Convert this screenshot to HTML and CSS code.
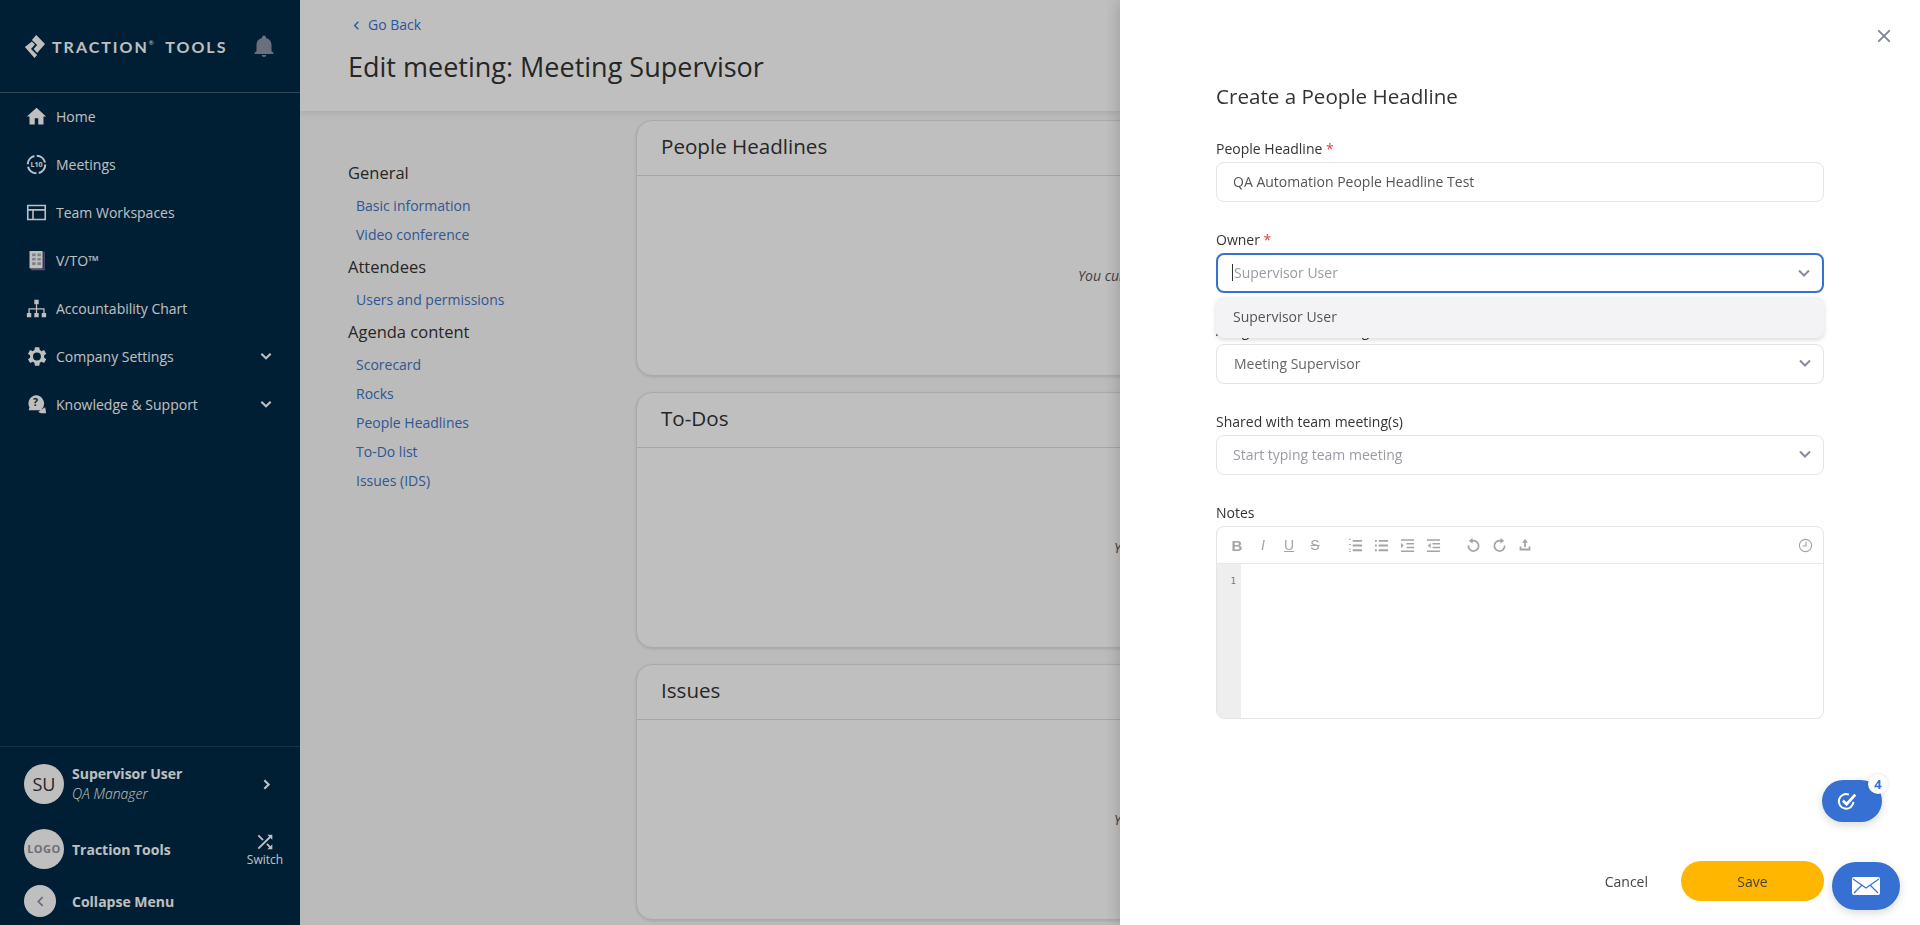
FILE: index.html
```html
<!DOCTYPE html>
<html lang="en">

<head>
    <meta charset="utf-8">
    <title>Edit meeting: Meeting Supervisor</title>
    <link rel="stylesheet" href="styles.css">
</head>

<body>
    <aside class="sidebar">
        <div class="brand">
            <svg class="brand_logo" viewBox="0 0 24 24" preserveAspectRatio="none"><path d="M14 1l10 9-9 9-4-4 4-4-6-5z"/><path d="M9 7.500l3.500 3-4.500 4.500 7 6-3 3L1 13z"/></svg>
            <span class="brand_name">TRACTION<sup>®</sup> TOOLS</span>
            <svg class="bell" viewBox="0 0 24 24"><path d="M12 23c1.200 0 2.200-.9 2.200-2H9.800c0 1.100 1 2 2.200 2zm7.500-6v-6c0-3.400-2-6.200-5.500-7V3.500C14 2.400 13.100 1.500 12 1.500S10 2.400 10 3.500V4c-3.500.8-5.500 3.600-5.500 7v6l-2 2v1h19v-1z"/></svg>
        </div>
        <nav class="mainnav">
            <a href="#"><svg viewBox="0 0 24 24"><path d="M10 21v-7h4v7h6v-9h3L12 2 1 12h3v9z"/></svg>Home</a>
            <a href="#"><svg viewBox="0 0 24 24"><circle class="ic_line" cx="12" cy="12" r="10" stroke-width="2.400" stroke-dasharray="13 2.700"/><text x="12" y="15" text-anchor="middle" class="ic_text">L10</text></svg>Meetings</a>
            <a href="#"><svg viewBox="0 0 24 24"><path class="ic_line" stroke-width="1.800" d="M2 4h20v16H2zM2 9h20M8 9v11"/></svg>Team Workspaces</a>
            <a href="#"><svg viewBox="0 0 24 24"><path d="M4 1h15v20H5a1 1 0 0 1-1-1z"/><path d="M20 2h1.500v21H6v-1.500h14z" fill="#8d5f9c"/><path d="M7 4h4v3H7zM13 4h4v3h-4zM7 9h4v3H7zM13 9h4v3h-4zM7 14h4v3H7zM13 14h4v3h-4z" fill="#a9adb5"/></svg>V/TO™</a>
            <a href="#"><svg viewBox="0 0 24 24"><path d="M9.500 2h5v5h-5zM1 17h5v5H1zM9.500 17h5v5h-5zM18 17h5v5h-5z"/><path class="ic_line" stroke-width="1.500" d="M12 7v10M3.500 17v-4.500h17V17"/></svg>Accountability Chart</a>
            <a href="#"><svg viewBox="0 0 24 24"><path d="M20.600 13.200c.1-.4.100-.8.100-1.200s0-.8-.1-1.200l2.500-2-2.400-4.100-3 1.200c-.6-.5-1.300-.9-2-1.200L15.200 1.500h-5L9.700 4.700c-.7.3-1.400.7-2 1.200l-3-1.200-2.400 4.100 2.500 2c-.1.400-.1.800-.1 1.200s0 .8.100 1.200l-2.500 2 2.400 4.100 3-1.200c.6.500 1.300.9 2 1.200l.5 3.200h5l.5-3.200c.7-.3 1.400-.7 2-1.200l3 1.200 2.400-4.100zM12.500 16.500a4.500 4.500 0 1 1 0-9 4.500 4.500 0 0 1 0 9z"/></svg>Company Settings<svg class="chev" viewBox="0 0 12 12"><path class="ic_line" stroke-width="1.800" d="M2 4l4 4 4-4"/></svg></a>
            <a href="#"><svg viewBox="0 0 24 24"><path d="M11 1.500a9.500 9.500 0 0 1 7 16l-1 1H3l1-3A9.500 9.500 0 0 1 11 1.500z"/><path d="M17 18l5-3 1 7h-6l-3-1.500z"/><text x="11" y="14" text-anchor="middle" class="ic_q">?</text></svg>Knowledge &amp; Support<svg class="chev" viewBox="0 0 12 12"><path class="ic_line" stroke-width="1.800" d="M2 4l4 4 4-4"/></svg></a>
        </nav>
        <div class="side_bottom">
            <div class="side_row user_row">
                <span class="avatar">SU</span>
                <div class="user_info">
                    <strong>Supervisor User</strong>
                    <em>QA Manager</em>
                </div>
                <svg class="chev_right" viewBox="0 0 12 12"><path class="ic_line" stroke-width="2" d="M4 2l4 4-4 4"/></svg>
            </div>
            <div class="side_row org_row">
                <span class="avatar avatar_logo">LOGO</span>
                <strong>Traction Tools</strong>
                <span class="switch">
                    <svg viewBox="0 0 24 24"><path d="M10.600 9.200L5.400 4 4 5.400l5.200 5.200zM14.500 4l2 2L4 18.600 5.400 20 18 7.500l2 2V4zm.3 9.400l-1.400 1.400 3.100 3.100-2 2.100H20v-5.500l-2 2z"/></svg>
                    Switch
                </span>
            </div>
            <div class="side_row collapse_row">
                <span class="collapse_btn"><svg viewBox="0 0 12 12"><path d="M8 2L4 6l4 4" fill="none" stroke="#8b93a5" stroke-width="1.600"/></svg></span>
                <strong>Collapse Menu</strong>
            </div>
        </div>
    </aside>

    <main class="page">
        <header class="page_head">
            <a class="goback" href="#"><svg viewBox="0 0 12 12"><path d="M8 2L4 6l4 4" fill="none" stroke="currentColor" stroke-width="1.500"/></svg>Go Back</a>
            <h1>Edit meeting: Meeting Supervisor</h1>
        </header>
        <div class="page_body">
            <nav class="sections">
                <h3>General</h3>
                <a href="#">Basic information</a>
                <a href="#">Video conference</a>
                <h3>Attendees</h3>
                <a href="#">Users and permissions</a>
                <h3>Agenda content</h3>
                <a href="#">Scorecard</a>
                <a href="#">Rocks</a>
                <a href="#">People Headlines</a>
                <a href="#">To-Do list</a>
                <a href="#">Issues (IDS)</a>
            </nav>
            <div class="cards">
                <section class="card">
                    <h2>People Headlines</h2>
                    <p class="card_empty first">You currently have</p>
                </section>
                <section class="card">
                    <h2>To-Dos</h2>
                    <p class="card_empty">You currently</p>
                </section>
                <section class="card">
                    <h2>Issues</h2>
                    <p class="card_empty">You currently</p>
                </section>
            </div>
        </div>
    </main>

    <div class="overlay"></div>

    <section class="panel">
        <button class="close" aria-label="Close"><svg viewBox="0 0 14 14"><path d="M2 2l10 10M12 2L2 12" stroke="#7d8494" stroke-width="1.600" fill="none"/></svg></button>
        <h2 class="panel_title">Create a People Headline</h2>

        <div class="field">
            <label>People Headline <span class="req">*</span></label>
            <div class="box">QA Automation People Headline Test</div>
        </div>

        <div class="field">
            <label>Owner <span class="req">*</span></label>
            <div class="box box_focus">
                <span class="caret"></span><span class="placeholder">Supervisor User</span>
                <svg class="arrow" viewBox="0 0 14 14"><path d="M2 4.500l5 5 5-5" fill="none" stroke="#8a8a9a" stroke-width="2"/></svg>
            </div>
            <div class="dropdown">Supervisor User</div>
        </div>

        <div class="field">
            <label>Assign to team meeting</label>
            <div class="box">
                <span class="value">Meeting Supervisor</span>
                <svg class="arrow" viewBox="0 0 14 14"><path d="M2 4.500l5 5 5-5" fill="none" stroke="#8a8a9a" stroke-width="2"/></svg>
            </div>
        </div>

        <div class="field">
            <label>Shared with team meeting(s)</label>
            <div class="box">
                <span class="placeholder">Start typing team meeting</span>
                <svg class="arrow" viewBox="0 0 14 14"><path d="M2 4.500l5 5 5-5" fill="none" stroke="#8a8a9a" stroke-width="2"/></svg>
            </div>
        </div>

        <div class="field notes">
            <label>Notes</label>
            <div class="editor">
                <div class="toolbar">
                    <div class="tool_group">
                        <span class="tool tool_b">B</span>
                        <span class="tool tool_i">I</span>
                        <span class="tool tool_u">U</span>
                        <span class="tool tool_s">S</span>
                    </div>
                    <div class="tool_group">
                        <span class="tool"><svg viewBox="0 0 16 16"><path d="M5 3h10M5 8h10M5 13h10" stroke-width="2"/><path d="M1 1.500h2M1 7h2M1 12h2M1 14.500h2" stroke-width="1"/></svg></span>
                        <span class="tool"><svg viewBox="0 0 16 16"><path d="M5 3h10M5 8h10M5 13h10M1 3h2M1 8h2M1 13h2" stroke-width="2"/></svg></span>
                        <span class="tool"><svg viewBox="0 0 16 16"><path d="M1 2h14M7 6h8M7 10h8M1 14h14" stroke-width="1.600"/><path class="solid" d="M1 5l3 3-3 3z"/></svg></span>
                        <span class="tool"><svg viewBox="0 0 16 16"><path d="M1 2h14M7 6h8M7 10h8M1 14h14" stroke-width="1.600"/><path class="solid" d="M5 5L2 8l3 3z"/></svg></span>
                    </div>
                    <div class="tool_group">
                        <span class="tool"><svg viewBox="0 0 16 16"><path d="M5.500 3.500a5.500 5.500 0 1 1-3 4.500" stroke-width="1.800"/><path class="solid" d="M7 0v6L3 3z"/></svg></span>
                        <span class="tool"><svg viewBox="0 0 16 16"><path d="M10.500 3.500a5.500 5.500 0 1 0 3 4.500" stroke-width="1.800"/><path class="solid" d="M9 0v6l4-3z"/></svg></span>
                        <span class="tool"><svg class="upload" viewBox="0 0 16 16"><path d="M8 3v8M2 10v4h12v-4" stroke-width="2.400"/><path class="solid" d="M8 0l4 5H4z"/></svg></span>
                    </div>
                    <span class="tool history"><svg viewBox="0 0 16 16"><circle cx="8" cy="8" r="6.500" stroke-width="1.200"/><path d="M8.500 4v4.500H5" stroke-width="1.200"/></svg></span>
                </div>
                <div class="editor_body">
                    <div class="gutter">1</div>
                </div>
            </div>
        </div>

        <div class="panel_foot">
            <button class="btn_cancel">Cancel</button>
            <button class="btn_save">Save</button>
        </div>

        <button class="fab fab_tasks" aria-label="Tasks">
            <svg viewBox="0 0 24 24"><path d="M19 13a8 8 0 1 1-5-8" fill="none" stroke="#fff" stroke-width="2.200"/><path d="M7.500 11.500l4 4L21 5" fill="none" stroke="#fff" stroke-width="3"/></svg>
            <span class="badge">4</span>
        </button>
        <button class="fab fab_mail" aria-label="Messages">
            <svg viewBox="0 0 28 18"><rect width="28" height="18" rx="2" fill="#fff"/><path d="M1 2l13 9 13-9M2 16l8-8M26 16l-8-8" fill="none" stroke="#3570d2" stroke-width="1.200"/></svg>
        </button>
    </section>
</body></html>
```

FILE: styles.css
```css
* {
    box-sizing: border-box;
}

html,
body {
    height: 100%;
}

body {
    margin: 0;
    display: flex;
    overflow: hidden;
    font-family: 'Open Sans', sans-serif;
    font-size: 14px;
    color: #333;
    background-color: #fafafa;
}

a {
    text-decoration: none;
}

button {
    font-family: inherit;
    border: none;
    background: none;
    padding: 0;
}

/*Sidebar*/
.sidebar {
    flex: 0 0 300px;
    display: flex;
    flex-direction: column;
    background-color: #002a46;
    color: #fff;
}

.brand {
    flex: 0 0 93px;
    display: flex;
    align-items: center;
    padding: 0 28px 0 24px;
    border-bottom: 1px solid rgba(255, 255, 255, .25);
}

.brand_logo {
    width: 21px;
    height: 24px;
    fill: #fff;
    margin-right: 7px;
}

.brand_name {
    font-family: 'Lato', sans-serif;
    font-weight: 700;
    font-size: 16px;
    letter-spacing: 2px;
    white-space: nowrap;
}

.brand_name sup {
    font-size: 6px;
    font-weight: 400;
    letter-spacing: 0;
    margin-right: 6px;
    vertical-align: 8px;
    line-height: 0;
}

.bell {
    width: 24px;
    height: 24px;
    margin-left: auto;
    margin-right: -4px;
    fill: #8d95a6;
}

.mainnav {
    margin-top: -1px;
}

.mainnav a {
    display: flex;
    align-items: center;
    height: 48px;
    padding: 0 24px 0 26px;
    color: #fff;
}

.mainnav a > svg:first-child {
    width: 21px;
    height: 21px;
    margin-right: 9px;
    fill: #fff;
}

.ic_line {
    fill: none;
    stroke: #fff;
}

.ic_text {
    font-family: 'Open Sans', sans-serif;
    font-size: 8px;
    font-weight: 700;
}

.ic_q {
    font-family: 'Open Sans', sans-serif;
    font-size: 12px;
    font-weight: 700;
    fill: #002a46;
}

.chev {
    width: 14px;
    height: 14px;
    margin-left: auto;
    margin-right: 3px;
}

.side_bottom {
    margin-top: auto;
    border-top: 1px solid rgba(255, 255, 255, .12);
    padding: 17px 24px 8px;
}

.side_row {
    display: flex;
    align-items: center;
}

.side_row strong {
    font-weight: 700;
}

.avatar {
    flex: 0 0 40px;
    width: 40px;
    height: 40px;
    border-radius: 50%;
    margin-right: 8px;
    background-color: #fff;
    color: #333;
    font-size: 18px;
    line-height: 40px;
    text-align: center;
}

.user_row {
    height: 40px;
}

.user_info strong,
.user_info em {
    display: block;
    line-height: 20px;
}

.user_info em {
    font-weight: 300;
}

.chev_right {
    width: 13px;
    height: 13px;
    margin-left: auto;
    margin-right: 3px;
}

.org_row {
    height: 40px;
    margin-top: 25px;
}

.avatar_logo {
    font-size: 11px;
    font-weight: 700;
    letter-spacing: .5px;
    color: #8b93a5;
}

.switch {
    margin-left: auto;
    margin-right: -13px;
    width: 48px;
    margin-top: 10px;
    font-size: 12px;
    line-height: 12px;
    text-align: center;
}

.switch svg {
    display: block;
    width: 22px;
    height: 22px;
    margin: -12px auto 1px;
    fill: #fff;
}

.collapse_row {
    height: 32px;
    margin-top: 16px;
}

.collapse_btn {
    width: 32px;
    height: 32px;
    border-radius: 50%;
    margin-right: 16px;
    background-color: #fff;
    display: flex;
    align-items: center;
    justify-content: center;
}

.collapse_btn svg {
    width: 13px;
    height: 13px;
}

/*Page behind the panel*/
.page {
    flex: 0 0 820px;
    overflow: hidden;
    display: flex;
    flex-direction: column;
}

.page_head {
    flex: 0 0 111px;
    background-color: #fff;
    padding: 14px 48px 0;
    box-shadow: 0 2px 6px rgba(0, 0, 0, .1);
    position: relative;
}

.goback {
    display: flex;
    align-items: center;
    color: #3b72d0;
    line-height: 22px;
}

.goback svg {
    width: 11px;
    height: 11px;
    margin: 0 6px 0 3px;
}

h1 {
    margin: 11px 0 0;
    font-size: 27px;
    font-weight: 500;
    line-height: 40px;
    color: #333;
}

.page_body {
    display: flex;
    align-items: flex-start;
    padding-left: 48px;
}

.sections {
    flex: 0 0 288px;
    padding-top: 44px;
}

.sections h3 {
    margin: 0;
    font-size: 16.500px;
    font-weight: 500;
    line-height: 36px;
    color: #333;
}

.sections a {
    display: block;
    padding-left: 8px;
    line-height: 29px;
    color: #3f74c4;
}

.cards {
    flex: 1;
    min-width: 0;
    padding-top: 9px;
}

.card {
    height: 256px;
    margin: 0 -40px 16px 0;
    background-color: #fff;
    border: 1px solid #e2e2e2;
    border-radius: 16px;
    box-shadow: 0 1px 3px rgba(0, 0, 0, .12);
}

.card h2 {
    margin: 0;
    height: 55px;
    padding: 0 24px;
    border-bottom: 1px solid #ddd;
    font-size: 20.600px;
    font-weight: 500;
    line-height: 51px;
    color: #333;
}

.card_empty {
    width: 483px;
    margin: 0;
    padding: 90px 0 0 477px;
    overflow: hidden;
    font-style: italic;
    color: #555;
    white-space: nowrap;
}

.card_empty.first {
    padding-left: 441px;
}

.overlay {
    position: fixed;
    top: 0;
    right: 0;
    bottom: 0;
    left: 0;
    background-color: rgba(0, 0, 0, .25);
}

/*Create panel*/
.panel {
    position: fixed;
    top: 0;
    right: 0;
    bottom: 0;
    width: 800px;
    display: flex;
    flex-direction: column;
    padding: 82px 96px 24px;
    background-color: #fff;
    box-shadow: 0 0 16px rgba(0, 0, 0, .22);
}

.close {
    position: absolute;
    top: 28px;
    right: 28px;
    width: 16px;
    height: 16px;
}

.panel_title {
    margin: 0 0 28px;
    font-size: 20.600px;
    font-weight: 500;
    line-height: 28px;
    color: #333;
}

.field {
    position: relative;
    margin-bottom: 27px;
}

.field label {
    display: block;
    padding-top: 1px;
    margin-bottom: 3px;
    line-height: 20px;
    color: #333;
}

.req {
    color: #e03a3a;
}

.box {
    position: relative;
    height: 40px;
    padding: 0 16px 2px;
    border: 1px solid #e4e4e8;
    border-radius: 8px;
    display: flex;
    align-items: center;
    color: #555;
}

.box_focus {
    border: 2px solid #3570d2;
    padding: 0 14px 2px;
}

.caret {
    width: 1px;
    height: 17px;
    margin-right: 1px;
    background-color: #333;
}

.placeholder {
    color: #9a9aa5;
}

.value {
    padding-left: 1px;
    color: #666;
}

.arrow {
    position: absolute;
    right: 11px;
    top: 11px;
    width: 14px;
    height: 14px;
}

.dropdown {
    position: absolute;
    z-index: 2;
    top: 68px;
    left: 0;
    right: 0;
    height: 41px;
    padding: 0 17px;
    border-radius: 8px;
    background-color: #f3f3f5;
    box-shadow: 0 2px 5px rgba(0, 0, 0, .15);
    line-height: 40px;
    color: #555;
}

.field.notes {
    margin-bottom: 0;
}

.editor {
    height: 193px;
    border: 1px solid #e4e4e8;
    border-radius: 8px;
    overflow: hidden;
    display: flex;
    flex-direction: column;
}

.toolbar {
    flex: 0 0 37px;
    display: flex;
    align-items: center;
    padding-left: 7px;
    border-bottom: 1px solid #e8e8e8;
}

.tool_group {
    display: flex;
    margin-right: 14px;
}

.tool {
    width: 26px;
    height: 22px;
    display: flex;
    align-items: center;
    justify-content: center;
    font-family: 'Liberation Sans', sans-serif;
    font-size: 14px;
    color: #a4a4a4;
}

.tool svg {
    width: 15px;
    height: 15px;
    fill: none;
    stroke: #a4a4a4;
}

.tool svg.upload {
    width: 12px;
    height: 12px;
}

.tool svg .solid {
    fill: #a4a4a4;
    stroke: none;
}

.tool_b {
    font-weight: 700;
    font-size: 15px;
}

.tool_i {
    font-style: italic;
}

.tool_u {
    text-decoration: underline;
}

.tool_s {
    text-decoration: line-through;
}

.history {
    margin-left: auto;
    margin-right: 5px;
}

.editor_body {
    flex: 1;
    display: flex;
}

.gutter {
    width: 24px;
    padding: 10px 5px 0 0;
    background-color: #eee;
    font-family: 'DejaVu Sans Mono', monospace;
    font-size: 9px;
    line-height: 15px;
    text-align: right;
    color: #777;
}

.panel_foot {
    margin-top: auto;
    display: flex;
    justify-content: flex-end;
    align-items: center;
}

.btn_cancel {
    margin-right: 33px;
    font-size: 14px;
    color: #444;
}

.btn_save {
    width: 143px;
    height: 40px;
    border-radius: 20px;
    background-color: #ffb600;
    font-size: 14px;
    color: #444;
}

/*Floating buttons*/
.fab {
    position: absolute;
    display: flex;
    align-items: center;
    background-color: #3570d2;
    box-shadow: 0 3px 10px rgba(0, 0, 0, .15);
}

.fab_tasks {
    top: 780px;
    right: 38px;
    width: 60px;
    height: 42px;
    border-radius: 21px;
    padding-left: 14px;
}

.fab_tasks svg {
    width: 22px;
    height: 22px;
}

.badge {
    position: absolute;
    top: -6px;
    right: -6px;
    width: 20px;
    height: 20px;
    border-radius: 50%;
    background-color: #fff;
    box-shadow: 0 0 3px rgba(0, 0, 0, .15);
    font-size: 13px;
    font-weight: 700;
    line-height: 20px;
    text-align: center;
    color: #3570d2;
}

.fab_mail {
    right: 20px;
    bottom: 15px;
    width: 68px;
    height: 48px;
    border-radius: 24px;
    justify-content: center;
}

.fab_mail svg {
    width: 28px;
    height: 18px;
}
```
